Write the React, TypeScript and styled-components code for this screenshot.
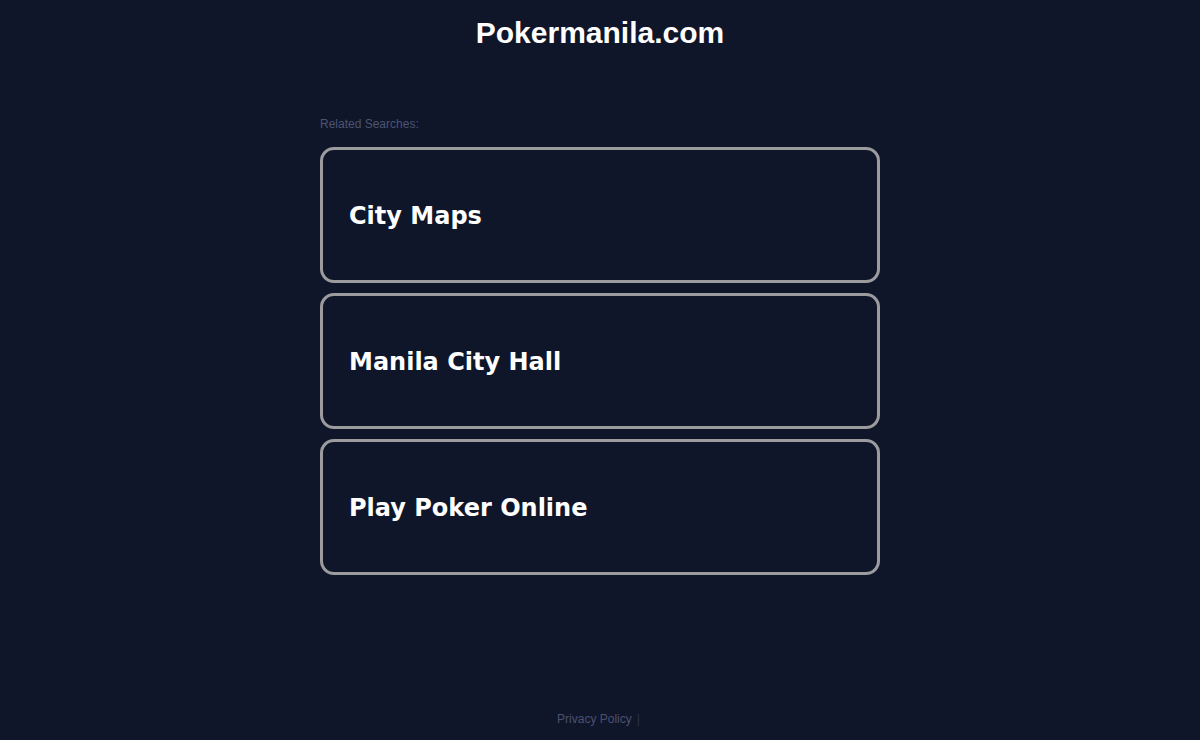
import React from "react";
import styled, { createGlobalStyle } from "styled-components";

const GlobalStyle = createGlobalStyle`
  html, body {
    margin: 0;
    padding: 0;
    background: #101629;
  }
  body {
    font-family: "Liberation Sans", Arial, sans-serif;
  }
`;

const searches = ["City Maps", "Manila City Hall", "Play Poker Online"];

function App() {
  return (
    <>
      <GlobalStyle />
      <StyledPage>
        <StyledHeader>
          <StyledTitle>Pokermanila.com</StyledTitle>
        </StyledHeader>
        <StyledMain>
          <StyledLabel>Related Searches:</StyledLabel>
          <StyledList>
            {searches.map((s) => (
              <StyledCard key={s} href="#">
                <StyledCardText>{s}</StyledCardText>
              </StyledCard>
            ))}
          </StyledList>
        </StyledMain>
        <StyledFooter>
          <StyledFooterLink href="#">Privacy Policy</StyledFooterLink>
          <StyledSep>|</StyledSep>
        </StyledFooter>
      </StyledPage>
    </>
  );
}

export default App;

const StyledPage = styled.div`
  display: flex;
  flex-direction: column;
  align-items: center;
  min-height: 740px;
  box-sizing: border-box;
`;

const StyledHeader = styled.header`
  padding-top: 15px;
  text-align: center;
`;

const StyledTitle = styled.h1`
  margin: 0;
  font-family: "Liberation Sans", Arial, sans-serif;
  font-size: 30px;
  font-weight: bold;
  color: #ffffff;
  line-height: 36px;
`;

const StyledMain = styled.main`
  width: 560px;
  margin-top: 66px;
  display: flex;
  flex-direction: column;
`;

const StyledLabel = styled.div`
  font-size: 12px;
  color: #4b5473;
  line-height: 14px;
  margin-bottom: 16px;
`;

const StyledList = styled.div`
  display: flex;
  flex-direction: column;
  gap: 10px;
`;

const StyledCard = styled.a`
  display: flex;
  align-items: center;
  height: 136px;
  box-sizing: border-box;
  border: 3px solid #9c9c9f;
  border-radius: 14px;
  padding: 1px 26px 0;
  text-decoration: none;
`;

const StyledCardText = styled.span`
  font-family: "DejaVu Sans", Verdana, sans-serif;
  font-weight: bold;
  font-size: 24px;
  color: #ffffff;
`;

const StyledFooter = styled.footer`
  margin-top: auto;
  padding-bottom: 14px;
  font-size: 12px;
  line-height: 14px;
  display: flex;
  gap: 5px;
  margin-right: 3px;
`;

const StyledFooterLink = styled.a`
  color: #4b5170;
  text-decoration: none;
`;

const StyledSep = styled.span`
  color: #2c3148;
`;
